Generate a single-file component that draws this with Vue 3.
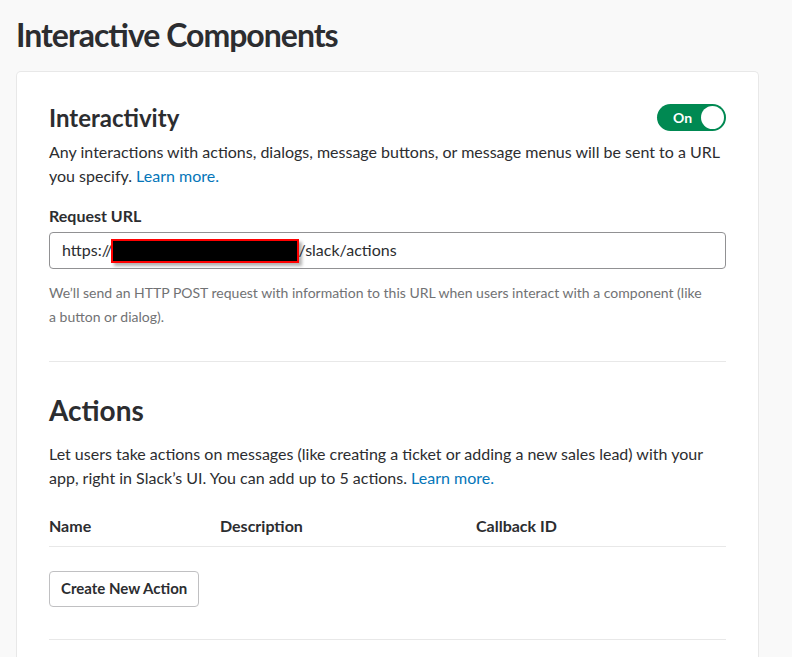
<script setup>
import { ref } from 'vue'
const enabled = ref(true)
const url = ref('/slack/actions')
</script>

<template>
  <main class="page">
    <h1>Interactive Components</h1>
    <div class="card">
      <section class="interactivity">
        <div class="head">
          <h2 id="interactivity-title">Interactivity</h2>
          <label class="switch">
            <input v-model="enabled" type="checkbox" aria-labelledby="interactivity-title" />
            <span class="word">{{ enabled ? 'On' : 'Off' }}</span>
            <span class="knob"></span>
          </label>
        </div>
        <p>Any interactions with actions, dialogs, message buttons, or message menus will be sent to a URL you specify. <a href="#interactivity">Learn more.</a></p>
        <label class="field-label" for="request-url">Request URL</label>
        <div class="field">
          <span class="scheme">https://</span>
          <span class="redacted"></span>
          <input id="request-url" v-model="url" type="text" />
        </div>
        <p class="note">We’ll send an HTTP POST request with information to this URL when users interact with a component (like a button or dialog).</p>
      </section>
      <section class="actions">
        <h2 class="big">Actions</h2>
        <p>Let users take actions on messages (like creating a ticket or adding a new sales lead) with your app, right in Slack’s UI. You can add up to 5 actions. <a href="#actions">Learn more.</a></p>
        <table>
          <thead>
            <tr><th class="name">Name</th><th class="description">Description</th><th>Callback ID</th></tr>
          </thead>
        </table>
        <button type="button">Create New Action</button>
      </section>
      <section class="next"></section>
    </div>
  </main>
</template>

<style>
body {
  background: #f9f9f9;
}
</style>

<style scoped>
* {
  box-sizing: border-box;
}
.page {
  padding: 15px 33px 0 16px;
  font: 16px/24px Lato, sans-serif;
  color: #2c2d30;
}
h1, h2, p {
  margin: 0;
}
h1 {
  font-size: 32px;
  line-height: 40px;
  font-weight: 700;
  letter-spacing: -1px;
  font-feature-settings: "liga";
}
.card {
  margin-top: 16px;
  padding: 32px 32px 0;
  background: #fff;
  border: 1px solid #e8e8e8;
  border-bottom: 0;
  border-radius: 5px 5px 0 0;
}
.head {
  display: flex;
  justify-content: space-between;
  height: 36px;
}
h2 {
  font-size: 24px;
  line-height: 28px;
  font-weight: 700;
}
h2.big {
  font-size: 28px;
  line-height: 34px;
  margin-bottom: 15px;
}
a {
  color: #0576b9;
  text-decoration: none;
}
.switch {
  position: relative;
  display: flex;
  align-items: center;
  justify-content: space-between;
  width: 69px;
  height: 27px;
  padding: 0 2px 0 16px;
  border-radius: 14px;
  background: #008952;
  color: #fff;
  font-size: 14px;
  font-weight: 700;
}
.switch input {
  position: absolute;
  inset: 0;
  width: 100%;
  height: 100%;
  margin: 0;
  opacity: 0;
}
.knob {
  width: 23px;
  height: 23px;
  border-radius: 50%;
  background: #fff;
}
.field-label {
  display: block;
  margin: 16px 0 4px;
  font-weight: 700;
}
.field {
  display: flex;
  align-items: center;
  height: 37px;
  padding: 0 12px;
  border: 1px solid #919193;
  border-radius: 4px;
}
.field input {
  flex: 1;
  min-width: 0;
  padding: 0 0 2px;
  border: 0;
  outline: 0;
  background: none;
  font: inherit;
  color: inherit;
}
.scheme {
  padding-bottom: 2px;
}
.redacted {
  width: 188px;
  height: 24px;
  margin-left: -2px;
  border: 2px solid #f00;
  background: #000;
  box-shadow: 3px 3px 3px rgba(0, 0, 0, 0.3);
}
.note {
  margin-top: 12px;
  padding-right: 16px;
  font-size: 14px;
  color: #717274;
}
.actions {
  margin-top: 32px;
  padding-top: 31px;
  border-top: 1px solid #e8e8e8;
}
table {
  width: 100%;
  margin: 20px 0 24px;
  border-collapse: collapse;
  table-layout: fixed;
}
th {
  padding: 4px 0 8px;
  border-bottom: 1px solid #e8e8e8;
  text-align: left;
  font-weight: 700;
}
.name {
  width: 171px;
}
.description {
  width: 256px;
}
button {
  height: 36px;
  padding: 0 11px 2px;
  border: 1px solid #c0c0c2;
  border-radius: 4px;
  background: #fff;
  font: 700 15px/20px Lato, sans-serif;
  color: #2c2d30;
}
.next {
  height: 18px;
  margin-top: 32px;
  border-top: 1px solid #e8e8e8;
}
</style>
